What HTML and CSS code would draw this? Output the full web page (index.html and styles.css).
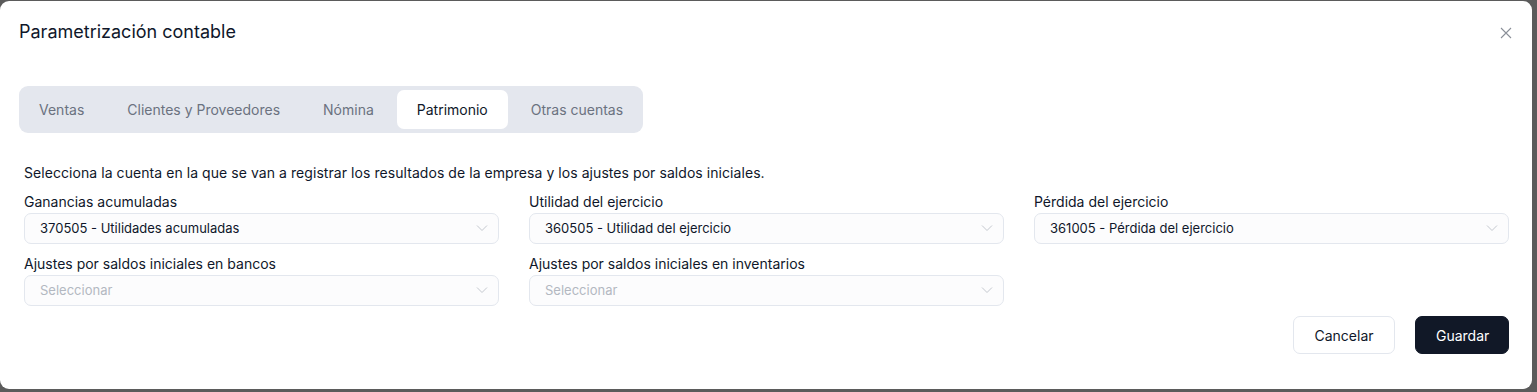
FILE: index.html
```html
<!DOCTYPE html>
<html lang="es">
<head>
<meta charset="utf-8">
<title>Parametrización contable</title>
<link rel="stylesheet" href="styles.css">
</head>
<body>
<div class="overlay">
  <div class="modal">
    <div class="header">
      <h2 class="title">Parametrización contable</h2>
      <button class="close" aria-label="Cerrar">
        <svg width="12" height="12" viewBox="0 0 12 12"><path d="M1 1L11 11M11 1L1 11" stroke="#8a8f98" stroke-width="1.1" fill="none"/></svg>
      </button>
    </div>
    <div class="tabs">
      <div class="tab">Ventas</div>
      <div class="tab">Clientes y Proveedores</div>
      <div class="tab">Nómina</div>
      <div class="tab active">Patrimonio</div>
      <div class="tab">Otras cuentas</div>
    </div>
    <div class="content">
      <p class="desc">Selecciona la cuenta en la que se van a registrar los resultados de la empresa y los ajustes por saldos iniciales.</p>
      <div class="grid">
        <div class="field">
          <label class="label">Ganancias acumuladas</label>
          <div class="select"><span>370505 - Utilidades acumuladas</span><svg class="chev" width="12" height="8" viewBox="0 0 12 8"><path d="M1 1.5L6 6.5L11 1.5" stroke="#c4c8cf" stroke-width="1" fill="none"/></svg></div>
        </div>
        <div class="field">
          <label class="label">Utilidad del ejercicio</label>
          <div class="select"><span>360505 - Utilidad del ejercicio</span><svg class="chev" width="12" height="8" viewBox="0 0 12 8"><path d="M1 1.5L6 6.5L11 1.5" stroke="#c4c8cf" stroke-width="1" fill="none"/></svg></div>
        </div>
        <div class="field">
          <label class="label">Pérdida del ejercicio</label>
          <div class="select"><span>361005 - Pérdida del ejercicio</span><svg class="chev" width="12" height="8" viewBox="0 0 12 8"><path d="M1 1.5L6 6.5L11 1.5" stroke="#c4c8cf" stroke-width="1" fill="none"/></svg></div>
        </div>
        <div class="field">
          <label class="label">Ajustes por saldos iniciales en bancos</label>
          <div class="select placeholder"><span>Seleccionar</span><svg class="chev" width="12" height="8" viewBox="0 0 12 8"><path d="M1 1.5L6 6.5L11 1.5" stroke="#c4c8cf" stroke-width="1" fill="none"/></svg></div>
        </div>
        <div class="field">
          <label class="label">Ajustes por saldos iniciales en inventarios</label>
          <div class="select placeholder"><span>Seleccionar</span><svg class="chev" width="12" height="8" viewBox="0 0 12 8"><path d="M1 1.5L6 6.5L11 1.5" stroke="#c4c8cf" stroke-width="1" fill="none"/></svg></div>
        </div>
      </div>
      <div class="actions">
        <button class="btn btn-outline">Cancelar</button>
        <button class="btn btn-primary">Guardar</button>
      </div>
    </div>
  </div>
</div>
</body>
</html>
```
FILE: styles.css
```css
* { box-sizing: border-box; }
html, body { margin: 0; padding: 0; }
body {
  background: #5b5b5b;
  font-family: Inter, "Liberation Sans", sans-serif;
  color: #0f172a;
  height: 392px;
  overflow: hidden;
}
.overlay {
  padding: 1px 5px 3px 0;
}
.modal {
  background: #ffffff;
  border-radius: 9px;
  width: 1532px;
  height: 388px;
  display: flex;
  flex-direction: column;
}
.header {
  display: flex;
  justify-content: space-between;
  align-items: center;
  padding: 20px 20px 0 19px;
  height: 42px;
}
.title {
  margin: 0;
  font-size: 18px;
  font-weight: 400;
  color: #0f172a;
  line-height: 24px;
}
.close {
  border: 0;
  background: transparent;
  padding: 0;
  width: 12px;
  height: 12px;
  display: flex;
  margin-top: 2px;
}
.tabs {
  margin: 43px 0 0 19px;
  align-self: flex-start;
  display: flex;
  gap: 3px;
  background: #e4e7ee;
  border-radius: 9px;
  padding: 4px 0;
  height: 47px;
}
.tab {
  font-size: 14px;
  color: #6b7280;
  padding: 0 20px;
  display: flex;
  align-items: center;
  border-radius: 7px;
}
.tab.active {
  background: #ffffff;
  color: #0f172a;
}
.content {
  padding: 0 23px 0 24px;
}
.desc {
  margin: 31px 0 0 0;
  font-size: 14px;
  line-height: 18px;
  letter-spacing: 0.06px;
  color: #0f172a;
}
.grid {
  margin-top: 11px;
  display: grid;
  grid-template-columns: repeat(3, 1fr);
  column-gap: 30px;
  row-gap: 11px;
}
.field {
  display: flex;
  flex-direction: column;
}
.label {
  font-size: 14px;
  line-height: 18px;
  margin-bottom: 2px;
  color: #0f172a;
}
.select {
  height: 31px;
  border: 1px solid #e3e7ee;
  border-radius: 7px;
  background: #fcfcfd;
  display: flex;
  align-items: center;
  justify-content: space-between;
  padding: 0 10px 1px 15px;
  font-size: 13px;
  color: #0f172a;
}
.select.placeholder { color: #b3b8c1; }
.chev { flex: none; }
.actions {
  display: flex;
  justify-content: flex-end;
  gap: 20px;
  margin-top: 10px;
}
.btn {
  height: 38px;
  border-radius: 7px;
  font-family: Inter, "Liberation Sans", sans-serif;
  font-size: 14px;
  padding: 0 20px;
  cursor: pointer;
}
.btn-outline {
  background: #ffffff;
  border: 1px solid #e3e7ee;
  color: #0f172a;
  width: 102px;
}
.btn-primary {
  background: #111827;
  border: 1px solid #111827;
  color: #ffffff;
  width: 94px;
}
```
